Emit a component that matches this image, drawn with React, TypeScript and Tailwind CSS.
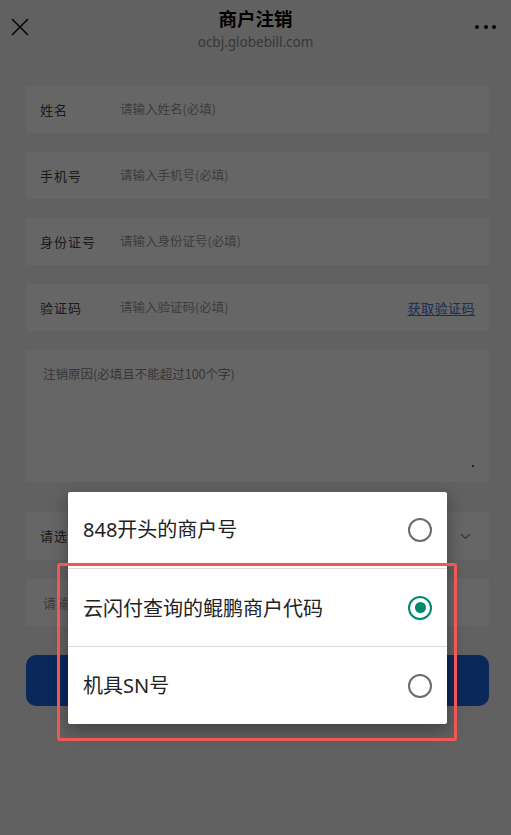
import React from "react";

function Field({ label, placeholder, right }: { label: string; placeholder: string; right?: React.ReactNode }) {
  return (
    <div className="flex h-[47px] items-center bg-white pl-[14px] pr-[14px]">
      <div className="w-[80px] text-[13px] tracking-[1px] text-[#444]">{label}</div>
      <div className="flex-1 text-[12.5px] text-[#9a9a9a]">{placeholder}</div>
      {right}
    </div>
  );
}

function Radio({ checked }: { checked?: boolean }) {
  if (checked) {
    return (
      <div className="flex h-[24px] w-[24px] items-center justify-center rounded-full border-[2.5px] border-[#00896f]">
        <div className="h-[11px] w-[11px] rounded-full bg-[#00896f]" />
      </div>
    );
  }
  return <div className="h-[24px] w-[24px] rounded-full border-2 border-[#6b6b6b]" />;
}

export default function App() {
  return (
    <div
      className="relative h-[835px] w-[511px] overflow-hidden bg-[#f2f2f2]"
      style={{ fontFamily: '"Noto Sans", "Noto Sans CJK SC", sans-serif' }}
    >
      {/* header */}
      <div className="grid h-[86px] grid-cols-[60px_1fr_60px] items-start">
        <div className="pl-[11px] pt-[18px]">
          <svg width="18" height="18" viewBox="0 0 18 18" fill="none" stroke="#111" strokeWidth="1.6">
            <path d="M1 1 L17 17 M17 1 L1 17" />
          </svg>
        </div>
        <div className="flex flex-col items-center pt-[6px]">
          <div className="text-[18.5px] font-bold leading-[24px] text-black" style={{ fontFamily: '"Noto Sans CJK SC", sans-serif' }}>
            商户注销
          </div>
          <div className="mt-[3px] text-[13.5px] leading-[18px] text-[#8c8c8c]">ocbj.globebill.com</div>
        </div>
        <div className="flex justify-end gap-[4.5px] pr-[15px] pt-[25px]">
          <div className="h-[4px] w-[4px] rounded-full bg-black" />
          <div className="h-[4px] w-[4px] rounded-full bg-black" />
          <div className="h-[4px] w-[4px] rounded-full bg-black" />
        </div>
      </div>

      {/* form */}
      <div className="ml-[26px] mr-[22px] flex flex-col" style={{ fontFamily: '"Noto Sans CJK SC", sans-serif' }}>
        <div className="flex flex-col gap-[19px]">
          <Field label="姓名" placeholder="请输入姓名(必填)" />
          <Field label="手机号" placeholder="请输入手机号(必填)" />
          <Field label="身份证号" placeholder="请输入身份证号(必填)" />
          <Field
            label="验证码"
            placeholder="请输入验证码(必填)"
            right={<span className="text-[13px] tracking-[0.5px] text-[#3f74d6] underline underline-offset-2">获取验证码</span>}
          />
          <div className="relative h-[132px] bg-white pl-[17px] pt-[15px]">
            <div className="text-[12.5px] text-[#8a8a8a]">注销原因(必填且不能超过100个字)</div>
            <div className="absolute bottom-[15px] right-[15px] h-[2px] w-[2px] bg-[#555]" />
          </div>
        </div>
        <div className="mt-[30px] flex h-[48px] items-center bg-white pl-[14px] pr-[18px]">
          <div className="flex-1 text-[13px] tracking-[1px] text-[#444]">请选择</div>
          <svg width="11" height="7" viewBox="0 0 11 7" fill="none" stroke="#888" strokeWidth="1.2">
            <path d="M1 1 L5.5 5.5 L10 1" />
          </svg>
        </div>
        <div className="mt-[19px] flex h-[47px] items-center bg-white pl-[17px]">
          <div className="text-[13px] tracking-[1px] text-[#9a9a9a]">请输入</div>
        </div>
        <div className="mt-[29px] flex h-[51px] items-center justify-center rounded-[10px] bg-[#1a66e0] text-[16px] text-white">
          提交
        </div>
      </div>

      {/* overlay */}
      <div className="absolute inset-0 bg-black/60" />

      {/* dialog */}
      <div
        className="absolute left-[68px] top-[492px] w-[379px] rounded-[2px] bg-white shadow-[0_6px_18px_rgba(0,0,0,0.35)]"
        style={{ fontFamily: '"Noto Sans CJK SC", sans-serif' }}
      >
        <div className="flex h-[76px] items-center justify-between pl-[15px] pr-[15px]">
          <span className="text-[20px] text-[#222]" style={{ fontFamily: '"Noto Sans", "Noto Sans CJK SC", sans-serif' }}>848开头的商户号</span>
          <Radio />
        </div>
        <div className="h-px bg-[#dcdcdc]" />
        <div className="flex h-[77px] items-center justify-between pl-[15px] pr-[15px]">
          <span className="text-[20px] text-[#222]">云闪付查询的鲲鹏商户代码</span>
          <Radio checked />
        </div>
        <div className="h-px bg-[#dcdcdc]" />
        <div className="flex h-[77px] items-center justify-between pl-[15px] pr-[15px]">
          <span className="text-[20px] text-[#222]" style={{ fontFamily: '"Noto Sans", "Noto Sans CJK SC", sans-serif' }}>机具SN号</span>
          <Radio />
        </div>
      </div>

      {/* red highlight box */}
      <div className="absolute left-[57px] top-[563px] h-[178px] w-[400px] rounded-[3px] border-[3px] border-[#f45656]" />
    </div>
  );
}
